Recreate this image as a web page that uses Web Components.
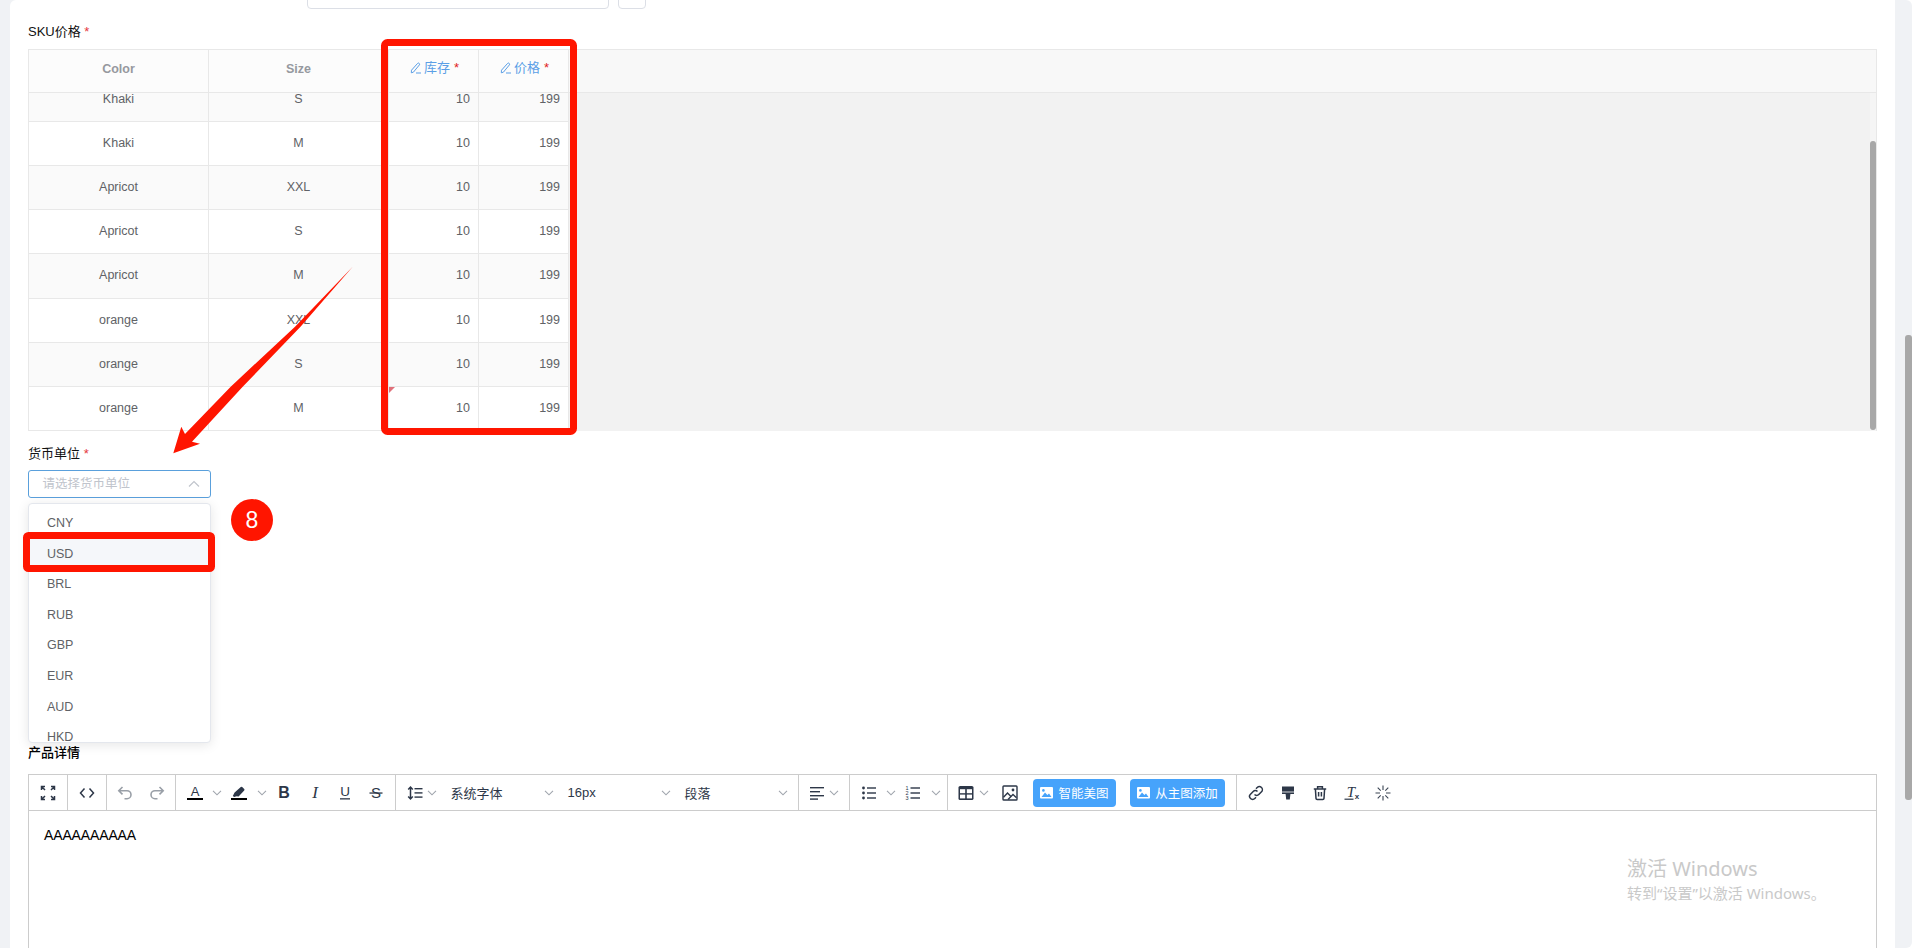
<!DOCTYPE html>
<html lang="zh">
<head>
<meta charset="utf-8">
<title>SKU</title>
<style>
  html, body { margin: 0; padding: 0; background: #fff; }
  body { width: 1912px; height: 948px; overflow: hidden; position: relative;
         font-family: "Liberation Sans", "Noto Sans CJK SC", sans-serif; }
</style>
</head>
<body>
<x-app-shell>
  <x-top-input></x-top-input>
  <x-field label="SKU价格" required style="margin-top:14px">
    <x-sku-table></x-sku-table>
  </x-field>
  <x-field label="货币单位" required style="margin-top:14px;--gap:7px">
    <x-select placeholder="请选择货币单位" options="CNY,USD,BRL,RUB,GBP,EUR,AUD,HKD" active="USD"></x-select>
  </x-field>
  <x-field label="产品详情" strong style="margin-top:246px;--gap:12px">
    <x-rich-editor>AAAAAAAAAA</x-rich-editor>
  </x-field>
</x-app-shell>
<x-annotations></x-annotations>
<x-watermark></x-watermark>

<script>
;(function(){

  const FONT = `"Liberation Sans", "Noto Sans CJK SC", sans-serif`;

  customElements.define('x-app-shell', class extends HTMLElement {
    constructor() {
      super();
      this.attachShadow({ mode: 'open' });
      this.shadowRoot.innerHTML = /*html*/`
        <style>
          :host { display: flex; width: 1912px; height: 948px; overflow: hidden; font-family: ${FONT}; }
          .frame { flex: 1; min-width: 0; background: #f0f2f5; padding-left: 10px; }
          .main { height: 100%; box-sizing: border-box; background: #fff; padding: 0 18px;
                  border-top-left-radius: 6px; overflow: hidden; }
          .bar { width: 17px; background: #f0f2f5; border-radius: 0 6px 6px 0; }
          .thumb { width: 7px; height: 465px; margin: 335px 0 0 10px; background: #a8a8a8; border-radius: 3px; }
        </style>
        <div class="frame"><div class="main"><slot></slot></div></div>
        <div class="bar"><div class="thumb"></div></div>
      `;
    }
  });

  customElements.define('x-top-input', class extends HTMLElement {
    constructor() {
      super();
      this.attachShadow({ mode: 'open' });
      this.shadowRoot.innerHTML = /*html*/`
        <style>
          :host { display: flex; gap: 9px; margin-left: 279px; height: 9px; }
          div { box-sizing: border-box; height: 32px; margin-top: -23px; background: #fff;
                border: 1px solid #dcdfe6; border-radius: 4px; }
          .input { width: 302px; }
          .btn { width: 28px; }
        </style>
        <div class="input"></div><div class="btn"></div>
      `;
    }
  });

  customElements.define('x-field', class extends HTMLElement {
    constructor() {
      super();
      this.attachShadow({ mode: 'open' });
      const req = this.hasAttribute('required') ? ' <i>*</i>' : '';
      this.shadowRoot.innerHTML = /*html*/`
        <style>
          :host { display: block; position: relative; }
          label { display: block; height: 18px; line-height: 18px; font-size: 13px; color: #111;
                  margin-bottom: var(--gap, 8px); white-space: pre; }
          label.strong { font-weight: 500; color: #000; }
          i { font-style: normal; color: #e5363c; }
        </style>
        <label class="${this.hasAttribute('strong') ? 'strong' : ''}">${this.getAttribute('label')}${req}</label>
        <slot></slot>
      `;
    }
  });

  const PEN = `<svg width="12" height="12" viewBox="0 0 12 12" fill="none" stroke="#5b9fe6" stroke-width="1">
    <path d="M1.5 8.2L7.6 1.4a1.1 1.1 0 0 1 1.6 0a1.1 1.1 0 0 1 .1 1.6L3.4 10.2L1.3 10.8zM6 11h5"/></svg>`;

  customElements.define('x-sku-table', class extends HTMLElement {
    constructor() {
      super();
      this.attachShadow({ mode: 'open' });
      const rows = [
        ['Khaki','S'],['Khaki','M'],['Apricot','XXL'],['Apricot','S'],
        ['Apricot','M'],['orange','XXL'],['orange','S'],['orange','M']
      ];
      const stripes = [1,0,1,0,1,0,1,0];
      const rowsHtml = rows.map((r, i) => `
        <div class="row ${stripes[i] ? 'odd' : ''}">
          <div class="c">${r[0]}</div>
          <div class="c">${r[1]}</div>
          <div class="c num ${i === 7 ? 'dirty' : ''}">10</div>
          <div class="c num">199</div>
        </div>`).join('');
      this.shadowRoot.innerHTML = /*html*/`
        <style>
          :host { display: block; box-sizing: border-box; border: 1px solid #e8e8e8; border-bottom: 0;
                  width: 1849px; font-size: 12.5px; color: #606266; }
          .head { display: grid; grid-template-columns: 180px 180px 90px 90px 1fr; height: 43px; box-sizing: border-box;
                  background: #f8f8f8; border-bottom: 1px solid #e8e8e8; }
          .head .h { display: flex; align-items: center; justify-content: center; background: #fcfcfc; box-sizing: border-box;
                     border-right: 1px solid #e8e8e8; font-weight: bold; color: #96999f; padding-bottom: 4px; }
          .head .edit { font-weight: normal; color: #5b9fe6; font-size: 13px; gap: 2px; padding: 0 0 6px 2px; line-height: 16px; }
          .head .edit i { font-style: normal; color: #e02020; margin-left: 2px; }
          .head .blank { background: none; border: 0; }
          .body { display: flex; height: 338px; background: #f2f2f2; overflow: hidden; }
          .rows { width: 540px; margin-top: -15.14px; }
          .row { display: grid; grid-template-columns: 180px 180px 90px 90px; height: 44.14px; box-sizing: border-box;
                 background: #fff; border-bottom: 1px solid #e8e8e8; }
          .row.odd { background: #fafafa; }
          .c { display: flex; align-items: center; justify-content: center; border-right: 1px solid #e8e8e8; position: relative;
               padding-bottom: 1px; }
          .num { justify-content: flex-end; padding-right: 8px; }
          .dirty::before { content: ''; position: absolute; left: 0; top: 0; border: 3px solid transparent;
                           border-top-color: #e0707a; border-left-color: #e0707a; }
          .spacer { flex: 1; }
          .track { width: 6px; background: #f5f5f5; }
          .thumb { height: 289px; margin-top: 48px; background: #a8a8a8; border-radius: 3px; }
        </style>
        <div class="head">
          <div class="h">Color</div>
          <div class="h">Size</div>
          <div class="h edit">${PEN}<span>库存</span><i>*</i></div>
          <div class="h edit">${PEN}<span>价格</span><i>*</i></div>
          <div class="h blank"></div>
        </div>
        <div class="body">
          <div class="rows">${rowsHtml}</div>
          <div class="spacer"></div>
          <div class="track"><div class="thumb"></div></div>
        </div>
      `;
    }
  });

  customElements.define('x-select', class extends HTMLElement {
    constructor() {
      super();
      this.attachShadow({ mode: 'open' });
      const active = this.getAttribute('active');
      const opts = this.getAttribute('options').split(',')
        .map(o => `<li class="${o === active ? 'on' : ''}">${o}</li>`).join('');
      this.shadowRoot.innerHTML = /*html*/`
        <style>
          :host { display: block; position: relative; width: 182.5px; height: 28px; }
          .box { box-sizing: border-box; height: 28px; border: 1px solid #5aa0dc; border-radius: 3px; background: #fff;
                 display: flex; align-items: center; justify-content: space-between; padding: 0 10px 0 13.5px; }
          .ph { font-size: 12.5px; line-height: 16px; color: #c0c4cc; }
          ul { position: absolute; z-index: 5; left: 0; top: 33px; width: 183px; height: 240px; box-sizing: border-box;
               margin: 0; padding: 4px 0 0; list-style: none; overflow: hidden; background: #fff;
               border: 1px solid #e4e7ed; border-radius: 4px; box-shadow: 0 2px 12px rgba(0,0,0,.1); }
          li { height: 30.6px; line-height: 30.6px; padding-left: 18px; font-size: 12.5px; color: #606266; }
          li.on { background: #f5f7fa; }
        </style>
        <div class="box">
          <span class="ph">${this.getAttribute('placeholder')}</span>
          <svg width="12" height="8" viewBox="0 0 12 8" fill="none" stroke="#c0c4cc" stroke-width="1.2"><path d="M1 6.5L6 1.5l5 5"/></svg>
        </div>
        <ul>${opts}</ul>
      `;
    }
  });

  // toolbar icons
  const C = '#2d3748';
  const svg = (inner, extra='') => `<svg width="16" height="16" viewBox="0 0 16 16" ${extra}>${inner}</svg>`;
  const line = (d, col=C, w=1.5) => svg(`<path d="${d}" fill="none" stroke="${col}" stroke-width="${w}"/>`);
  const txt = (t, attrs, after='') => svg(`<text x="8" text-anchor="middle" fill="${C}" ${attrs}>${t}</text>${after}`);
  const SANS = 'font-family="Liberation Sans"', SERIF = 'font-family="Liberation Serif"';
  const bars = (x0, widths, ys, h=1.4) => widths.map((w,i)=>`<rect x="${x0}" y="${ys[i]}" width="${w}" height="${h}" fill="${C}"/>`).join('');

  const ICON = {
    full: line('M1.5 5V1.5H5M1.5 1.5L5 5M14.5 5V1.5H11M14.5 1.5L11 5M1.5 11v3.5H5M1.5 14.5L5 11M14.5 11v3.5H11M14.5 14.5L11 11'),
    code: line('M5.5 3.5L1.5 8l4 4.5M10.5 3.5l4 4.5l-4 4.5'),
    undo: line('M5.5 2L1.8 5.7l3.7 3.7M2.3 5.7H10a4 4 0 0 1 0 8H7.5', '#999fa7', 1.6),
    redo: line('M10.5 2l3.7 3.7l-3.7 3.7M13.7 5.7H6a4 4 0 0 0 0 8h2.5', '#999fa7', 1.6),
    color: txt('A', `y="11" font-size="13" ${SANS}`, '<rect y="13" width="16" height="2" fill="#000"/>'),
    mark: svg(`<path d="M3.6 7.6L9.8 2a1 1 0 0 1 1.4 0l2 2a1 1 0 0 1 0 1.4L7.6 11.4L5.6 11.2L3.2 12L1.8 11z" fill="${C}"/><rect y="13" width="16" height="2" fill="#000"/>`),
    bold: txt('B', `y="13.4" font-size="16" font-weight="bold" ${SANS}`),
    ital: txt('I', `y="13.4" font-size="17" font-style="italic" ${SERIF}`),
    under: txt('U', `y="11" font-size="13.5" ${SANS}`, `<rect x="3" y="13.2" width="10" height="1.3" fill="${C}"/>`),
    strike: txt('S', `y="13.2" font-size="15" ${SANS}`, `<rect x="1.5" y="7.4" width="13" height="1.3" fill="${C}"/>`),
    lh: svg(`<path d="M3.5 2v12M1.2 4.4L3.5 2l2.3 2.4M1.2 11.6L3.5 14l2.3-2.4" fill="none" stroke="${C}" stroke-width="1.5"/>` + bars(7.5,[8,8,8],[3,7.2,11.4])),
    align: svg(bars(1,[14,10,14,8],[2,6,10,13.4])),
    ul: svg(`<circle cx="2.5" cy="3" r="1.4" fill="${C}"/><circle cx="2.5" cy="8" r="1.4" fill="${C}"/><circle cx="2.5" cy="13" r="1.4" fill="${C}"/>` + bars(6,[9,9,9],[2.3,7.3,12.3])),
    ol: svg(`<g font-size="5.5" ${SANS} fill="${C}" text-anchor="middle"><text x="2" y="5">1</text><text x="2" y="10">2</text><text x="2" y="15">3</text></g>` + bars(5.5,[9.5,9.5,9.5],[2.3,7.3,12.3])),
    table: svg(`<rect x=".5" y="1" width="15" height="14" rx="1.6" fill="${C}"/><rect x="2" y="4.2" width="5.2" height="4" fill="#fff"/><rect x="8.8" y="4.2" width="5.2" height="4" fill="#fff"/><rect x="2" y="9.6" width="5.2" height="3.8" fill="#fff"/><rect x="8.8" y="9.6" width="5.2" height="3.8" fill="#fff"/>`),
    image: svg(`<rect x="1" y="1" width="14" height="14" rx=".8" fill="none" stroke="${C}" stroke-width="1.4"/><circle cx="11" cy="5" r="1.4" fill="${C}"/><path d="M1.5 12.2L5.5 8l3 3M6 14.5l5-5l3.5 3.3" fill="none" stroke="${C}" stroke-width="1.4"/>`),
    link: line('M6.5 9.5a3 3 0 0 0 4.3 0l2.7-2.7a3 3 0 0 0-4.3-4.3L8 3.7M9.5 6.5a3 3 0 0 0-4.3 0L2.5 9.2a3 3 0 0 0 4.3 4.3L8 12.3'),
    brush: svg(`<path d="M2 1.5h12V9h-3.6l-.6 5.5H6.2L5.6 9H2z" fill="${C}"/><rect x="2" y="6.6" width="12" height=".8" fill="#fff"/>`),
    trash: line('M1.8 4h12.4M5.6 4V1.8h4.8V4M3.4 4l.6 9.4a1.2 1.2 0 0 0 1.2 1.1h5.6a1.2 1.2 0 0 0 1.2-1.1L12.6 4M6.6 7v4.6M9.4 7v4.6'),
    clear: svg(`<text x="7" y="11.5" text-anchor="middle" font-size="15" font-style="italic" ${SERIF} fill="${C}">T</text><text x="13" y="14.4" text-anchor="middle" font-size="8" font-weight="bold" ${SANS} fill="${C}">x</text><rect x=".5" y="13.6" width="9" height="1.2" fill="${C}"/>`),
    magic: line('M8 .5v4.5M8 11v4.5M.5 8H5M11 8h4.5M2.7 2.7l3 3M10.3 10.3l3 3M13.3 2.7l-3 3M5.7 10.3l-3 3', '#3a4453', 1.1),
  };
  const PIC = `<svg width="13" height="12" viewBox="0 0 13 12"><rect width="13" height="11.5" rx="1" fill="#fff"/><circle cx="3.4" cy="3.4" r="1.3" fill="#46a3fb"/><path d="M1.5 10L5 5.5l2.4 2.6L9 6.6L11.5 10z" fill="#46a3fb"/></svg>`;
  const CHEV = `<svg class="chev" width="10" height="6" viewBox="0 0 10 6" fill="none" stroke="#a0a5ad" stroke-width="1.1"><path d="M1 .8L5 4.8L9 .8"/></svg>`;

  // width of the icon box, left margin of the box, left margin of the chevron
  const tool = (name, w, ml=0, chev=null) =>
    `<span class="tool" style="width:${w}px;margin-left:${ml}px">${ICON[name]}</span>` +
    (chev === null ? '' : `<span class="ch" style="margin-left:${chev}px">${CHEV}</span>`);
  const pick = (label, ml=13.5) =>
    `<span class="pick" style="margin-left:${ml}px"><span>${label}</span>${CHEV}</span>`;
  const btn = (label, w, ml) =>
    `<span class="btn" style="width:${w}px;margin-left:${ml}px">${PIC}<span>${label}</span></span>`;

  customElements.define('x-rich-editor', class extends HTMLElement {
    constructor() {
      super();
      this.attachShadow({ mode: 'open' });
      this.shadowRoot.innerHTML = /*html*/`
        <style>
          :host { display: block; box-sizing: border-box; width: 1849px; height: 400px; background: #fff;
                  border: 1px solid #ccc; }
          .bar { display: flex; height: 36px; box-sizing: border-box; border-bottom: 1px solid #ccc; }
          .g { display: flex; align-items: center; flex: none; box-sizing: border-box; border-right: 1px solid #ccc; }
          .g.last { border-right: 0; }
          .tool { display: flex; justify-content: center; align-items: center; flex: none; }
          .ch { display: flex; flex: none; width: 10px; }
          .pick { display: flex; align-items: center; justify-content: space-between; width: 103.5px; flex: none;
                  font-size: 13px; color: #2d3748; }
          .btn { display: flex; align-items: center; justify-content: center; gap: 5px; flex: none; height: 28px; box-sizing: border-box;
                 background: #46a3fb; color: #fff; border-radius: 4px; font-size: 12.5px; }
          .body { padding: 15px 15px; font-size: 14px; line-height: 18px; color: #000; letter-spacing: -0.14px; }
        </style>
        <div class="bar">
          <div class="g" style="width:39px;justify-content:center">${tool('full',16)}</div>
          <div class="g" style="width:39px;justify-content:center">${tool('code',16)}</div>
          <div class="g" style="width:69px;padding-left:2px">${tool('undo',32)}${tool('redo',32)}</div>
          <div class="g" style="width:220px;padding-left:3px">
            ${tool('color',32,0,1)}${tool('mark',32,1,2)}${tool('bold',34)}${tool('ital',28)}${tool('under',32)}${tool('strike',30)}
          </div>
          <div class="g" style="width:403px;padding-left:7px">
            ${tool('lh',24,0,0)}${pick('系统字体')}${pick('16px')}${pick('段落')}
          </div>
          <div class="g" style="width:51px;padding-left:6px">${tool('align',24,0,0)}</div>
          <div class="g" style="width:98px;padding-left:7px">${tool('ul',24,0,5)}${tool('ol',24,5,6)}</div>
          <div class="g" style="width:289px;padding-left:6px">
            ${tool('table',24,0,1)}${tool('image',24,9)}${btn('智能美图',83,11)}${btn('从主图添加',95,14)}
          </div>
          <div class="g last" style="padding-left:3px">
            ${tool('link',32)}${tool('brush',32)}${tool('trash',32)}${tool('clear',31)}${tool('magic',32)}
          </div>
        </div>
        <div class="body"><slot></slot></div>
      `;
    }
  });

  // the red marks someone drew on the screenshot
  customElements.define('x-annotations', class extends HTMLElement {
    constructor() {
      super();
      this.attachShadow({ mode: 'open' });
      this.shadowRoot.innerHTML = /*html*/`
        <style>
          :host { position: absolute; left: 0; top: 0; width: 1912px; height: 948px; z-index: 10; pointer-events: none; }
          svg { display: block; }
          text { font-family: "Liberation Sans", sans-serif; }
        </style>
        <svg width="1912" height="948" viewBox="0 0 1912 948">
          <rect x="384.5" y="42.5" width="189" height="389" rx="3" fill="none" stroke="#ff1500" stroke-width="7"/>
          <rect x="26.5" y="535.5" width="185" height="33" rx="2" fill="none" stroke="#ff1500" stroke-width="7"/>
          <path d="M352.7 266.7L300.5 326.7L242.7 386.7L192 441.7L200 443.7L173.3 453.3L181.3 426.7L185 434L230.7 386.7L295 326.7z" fill="#ff1500"/>
          <circle cx="252" cy="520" r="21" fill="#ff1500"/>
          <text x="252" y="528" text-anchor="middle" font-size="23" fill="#fff">8</text>
        </svg>
      `;
    }
  });

  customElements.define('x-watermark', class extends HTMLElement {
    constructor() {
      super();
      this.attachShadow({ mode: 'open' });
      this.shadowRoot.innerHTML = /*html*/`
        <style>
          :host { position: absolute; left: 1627px; top: 855px; z-index: 9; color: #c9c9c9; white-space: nowrap;
                  font-family: "Noto Sans", "Noto Sans CJK SC", sans-serif; }
          .a { font-size: 20px; line-height: 28px; }
          .b { font-size: 15px; line-height: 20px; }
        </style>
        <div class="a">激活 Windows</div>
        <div class="b">转到“设置”以激活 Windows。</div>
      `;
    }
  });

})();
</script>
</body>
</html>
